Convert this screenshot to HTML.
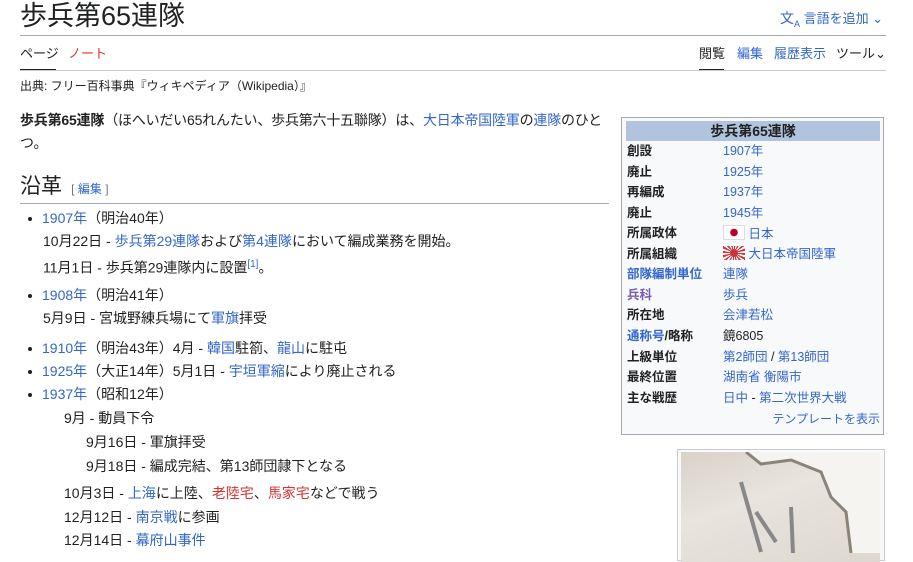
<!DOCTYPE html>
<html><head><meta charset="utf-8"><style>
body{margin:0;width:913px;height:553px;overflow:hidden;background:#fff;font-family:"Liberation Sans","Noto Sans CJK JP",sans-serif;color:#202122;font-size:14px;position:relative}
.a{position:absolute;white-space:nowrap;line-height:18px}
a,.l{color:#3366cc;text-decoration:none}
.r{color:#d73333}
.v{color:#795cb2}
b{font-weight:bold}
.bul{position:absolute;width:4px;height:4px;background:#202122;border-radius:50%}
.ib{position:absolute;left:621px;top:117px;width:261px;height:316px;border:1px solid #a2a9b1;background:#f8f9fa}
.ib .h{position:absolute;left:4px;top:3px;width:254px;height:20px;background:#b0c4de;text-align:center;font-weight:bold;line-height:20px;font-size:14px}
.ib .k{position:absolute;left:5px;font-weight:bold;font-size:12.5px;line-height:16px}
.ib .w{position:absolute;left:101px;font-size:12.5px;line-height:16px;color:#3366cc}
</style></head><body>
<div class="a" style="left:20px;top:0;font-size:27px;line-height:32px">歩兵第65連隊</div>
<div class="a" style="left:780px;top:9px;font-size:13px;color:#3366cc"><span style="font-size:14px">文<sub style="font-size:9px">A</sub></span> 言語を追加 ⌄</div>
<div style="position:absolute;left:20px;top:35px;width:866px;height:1px;background:#a2a9b1"></div>
<div class="a" style="left:20px;top:45px;font-size:13px">ページ</div>
<div class="a r" style="left:68px;top:45px;font-size:13px">ノート</div>
<div style="position:absolute;left:20px;top:69px;width:36px;height:2px;background:#202122"></div>
<div class="a" style="left:699px;top:45px;font-size:13px">閲覧</div>
<div style="position:absolute;left:699px;top:69px;width:25px;height:2px;background:#202122"></div>
<div class="a l" style="left:737px;top:45px;font-size:13px">編集</div>
<div class="a l" style="left:774px;top:45px;font-size:13px">履歴表示</div>
<div class="a" style="left:836px;top:45px;font-size:13px">ツール⌄</div>
<div style="position:absolute;left:20px;top:70px;width:866px;height:1px;background:#c8ccd1"></div>
<div class="a" style="left:20px;top:77px;font-size:12px">出典: フリー百科事典『ウィキペディア（Wikipedia）』</div>

<div class="a" style="left:20px;top:111px;letter-spacing:-0.2px"><b>歩兵第65連隊</b>（ほへいだい65れんたい、歩兵第六十五聯隊）は、<a>大日本帝国陸軍</a>の<a>連隊</a>のひと</div>
<div class="a" style="left:20px;top:134px">つ。</div>
<div class="a" style="left:20px;top:174px;font-size:21px;line-height:26px">沿革 <span style="font-size:12px;color:#72777d">&nbsp;[ <a>編集</a> ]</span></div>
<div style="position:absolute;left:20px;top:203px;width:589px;height:1px;background:#a2a9b1"></div>

<div class="bul" style="left:28px;top:217px"></div><div class="a" style="left:42px;top:209px"><a>1907年</a>（明治40年）</div>
<div class="a" style="left:43px;top:232px">10月22日 - <a>歩兵第29連隊</a>および<a>第4連隊</a>において編成業務を開始。</div>
<div class="a" style="left:43px;top:256px">11月1日 - 歩兵第29連隊内に設置<sup style="font-size:10px;color:#3366cc">[1]</sup>。</div>
<div class="bul" style="left:28px;top:294px"></div><div class="a" style="left:42px;top:286px"><a>1908年</a>（明治41年）</div>
<div class="a" style="left:43px;top:309px">5月9日 - 宮城野練兵場にて<a>軍旗</a>拝受</div>
<div class="bul" style="left:28px;top:347px"></div><div class="a" style="left:42px;top:339px"><a>1910年</a>（明治43年）4月 - <a>韓国</a>駐箚、<a>龍山</a>に駐屯</div>
<div class="bul" style="left:28px;top:370px"></div><div class="a" style="left:42px;top:362px"><a>1925年</a>（大正14年）5月1日 - <a>宇垣軍縮</a>により廃止される</div>
<div class="bul" style="left:28px;top:393px"></div><div class="a" style="left:42px;top:385px"><a>1937年</a>（昭和12年）</div>
<div class="a" style="left:64px;top:409px">9月 - 動員下令</div>
<div class="a" style="left:86px;top:433px">9月16日 - 軍旗拝受</div>
<div class="a" style="left:86px;top:457px">9月18日 - 編成完結、第13師団隷下となる</div>
<div class="a" style="left:64px;top:484px">10月3日 - <a>上海</a>に上陸、<span class="r">老陸宅</span>、<span class="r">馬家宅</span>などで戦う</div>
<div class="a" style="left:64px;top:508px">12月12日 - <a>南京戦</a>に参画</div>
<div class="a" style="left:64px;top:531px">12月14日 - <a>幕府山事件</a></div>

<div class="ib">
<div class="h">歩兵第65連隊</div>
<div class="k" style="top:25px">創設</div><div class="w" style="top:25px">1907年</div>
<div class="k" style="top:46px">廃止</div><div class="w" style="top:46px">1925年</div>
<div class="k" style="top:66px">再編成</div><div class="w" style="top:66px">1937年</div>
<div class="k" style="top:87px">廃止</div><div class="w" style="top:87px">1945年</div>
<div class="k" style="top:107px">所属政体</div><div class="w" style="top:107px"><span style="display:inline-block;width:20px;height:13px;border:1px solid #ddd;background:radial-gradient(circle,#bc002d 3.5px,#fff 4px);vertical-align:-2px"></span> 日本</div>
<div class="k" style="top:128px">所属組織</div><div class="w" style="top:128px"><span style="display:inline-block;width:22px;height:14px;background:repeating-conic-gradient(from 0deg at 50% 50%,#d0313c 0 11.25deg,#fff 11.25deg 22.5deg);vertical-align:-2px;position:relative"><span style="position:absolute;left:7px;top:3px;width:8px;height:8px;border-radius:50%;background:#d0313c"></span></span> 大日本帝国陸軍</div>
<div class="k l" style="top:148px">部隊編制単位</div><div class="w" style="top:148px">連隊</div>
<div class="k v" style="top:169px">兵科</div><div class="w" style="top:169px">歩兵</div>
<div class="k" style="top:189px">所在地</div><div class="w" style="top:189px">会津若松</div>
<div class="k" style="top:210px"><span class="l">通称号</span>/略称</div><div class="w" style="top:210px;color:#202122">鏡6805</div>
<div class="k" style="top:231px">上級単位</div><div class="w" style="top:231px">第2師団 <span style="color:#202122">/</span> 第13師団</div>
<div class="k" style="top:251px">最終位置</div><div class="w" style="top:251px">湖南省 衡陽市</div>
<div class="k" style="top:272px">主な戦歴</div><div class="w" style="top:272px">日中 <span style="color:#202122">-</span> 第二次世界大戦</div>
<div class="w" style="top:293px;left:auto;right:3px;font-size:12px">テンプレートを表示</div>
</div>
<div style="position:absolute;left:677px;top:449px;width:206px;height:110px;border:1px solid #c8ccd1;background:#f8f9fa"></div>
<div style="position:absolute;left:681px;top:452px;width:199px;height:110px;background:linear-gradient(160deg,#d8d2c8 0%,#e8e4de 40%,#ddd8cf 100%)">
<svg width="199" height="101" style="position:absolute;left:0;top:0"><path d="M65 0 L80 12 L110 8 L140 20 L150 45 L165 60 L170 101 L199 101 L199 0Z" fill="#f6f4f1"/><path d="M65 0 L80 12 L110 8 L140 20 L150 45 L165 60 L170 101" fill="none" stroke="#8a8378" stroke-width="3"/><path d="M60 30 L80 100 M75 60 L95 90 M110 55 L112 101" stroke="#888" stroke-width="4" fill="none"/></svg>
</div>
</body></html>
